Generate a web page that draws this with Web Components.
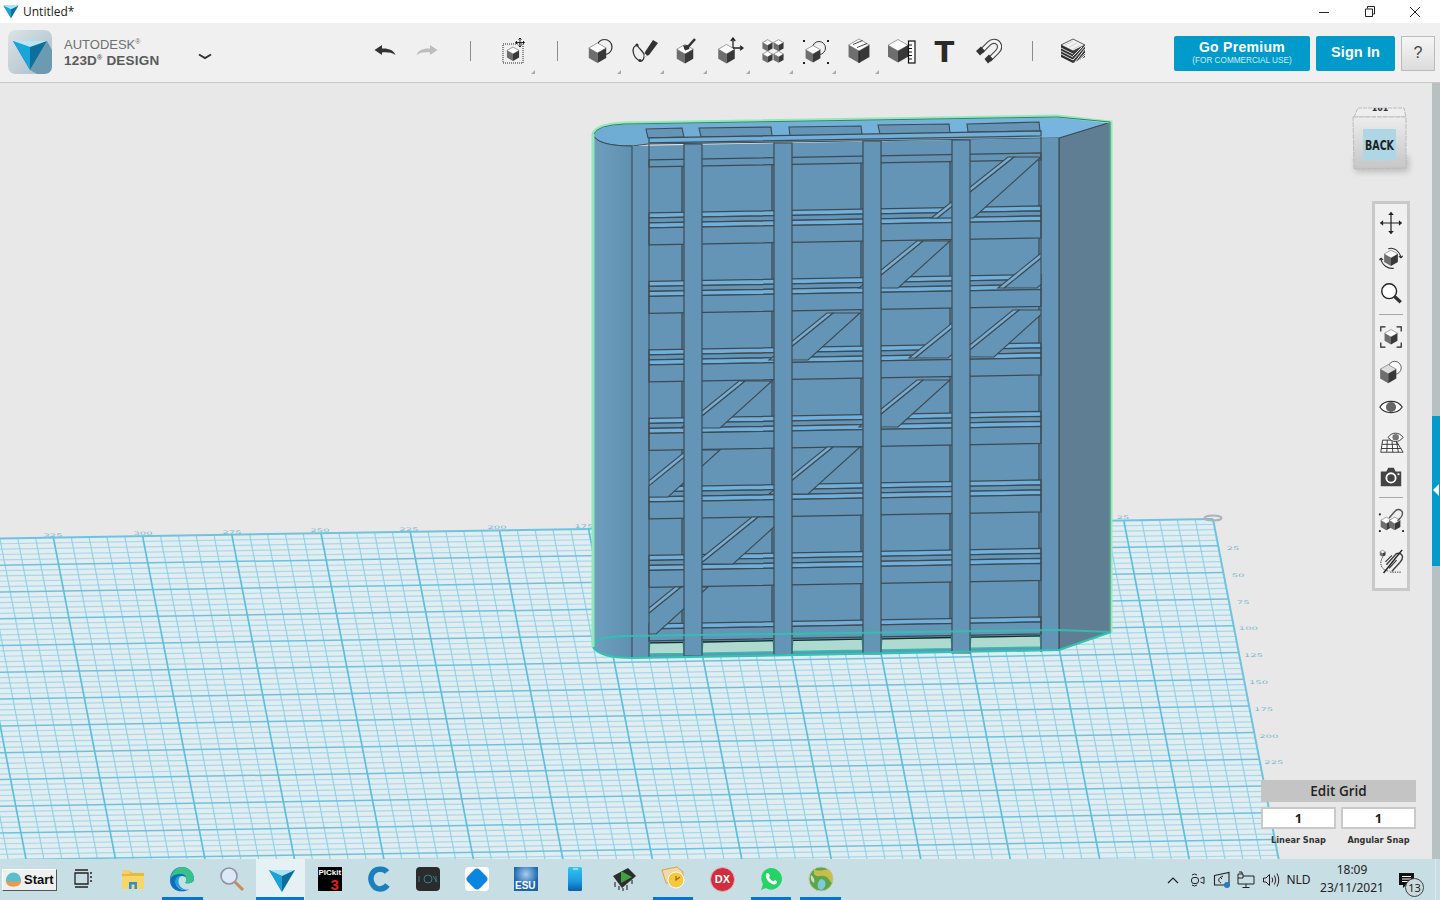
<!DOCTYPE html>
<html>
<head>
<meta charset="utf-8">
<title>123D Design</title>
<style>
html,body{margin:0;padding:0;height:100%;overflow:hidden;}
body{display:flex;flex-direction:column;height:900px;font-family:"Open Sans","Liberation Sans",sans-serif;background:#e8e8e8;}
</style>
</head>
<body>
<title-bar></title-bar>
<app-toolbar></app-toolbar>
<work-view></work-view>
<task-bar></task-bar>
<script>
// small icon helpers, all on a 28 box
const cube = (x,y,r,top="#fff") => {
    const w = r*.87, h = r*.5;
    return `<polygon points="${x},${y-r} ${x+w},${y-h} ${x},${y} ${x-w},${y-h}" fill="${top}" stroke="#444" stroke-width=".5"/>
    <polygon points="${x-w},${y-h} ${x},${y} ${x},${y+r} ${x-w},${y+h}" fill="#6e6e6e"/>
    <polygon points="${x+w},${y-h} ${x},${y} ${x},${y+r} ${x+w},${y+h}" fill="#383838"/>`;
};
const svg = (inner,size=28) => `<svg slot="icon" width="${size}" height="${size}" viewBox="0 0 28 28">${inner}</svg>`;
const dots = (x,y,w,h) => `<rect x="${x}" y="${y}" width="${w}" height="${h}" fill="none" stroke="#222" stroke-width="1" stroke-dasharray="1 1"/>`;
const handles = pts => pts.map(p=>`<rect x="${p[0]}" y="${p[1]}" width="2" height="2" fill="#222"/>`).join("");

const icons = {
    undo: `<path d="M3.500 13 L11 8 L11 11.500 C17 11 23 13 24.500 18 C21 15.500 16 15 11 15.500 L11 18Z" fill="#333"/>`,
    redo: `<path d="M24.500 13 L17 8 L17 11.500 C11 11 5 13 3.500 18 C7 15.500 12 15 17 15.500 L17 18Z" fill="#bdbdbd"/>`,
    transform: dots(3,7,20,19)+cube(13,17,7)+`<path d="M20 1V10M15.500 5.500H24.500M20 1l-1.500 1.500M20 1l1.500 1.500M20 10l-1.500-1.500M20 10l1.500-1.500M15.500 5.500l1.500-1.500M15.500 5.500l1.500 1.500M24.500 5.500l-1.500-1.500M24.500 5.500l-1.500 1.500" stroke="#222" stroke-width="1" fill="none"/>`,
    prim: `<circle cx="17.500" cy="10" r="7.500" fill="none" stroke="#333" stroke-width="1.200"/>`+cube(10.500,16,10),
    sketch: `<path d="M7 8C1 10 2 20 10 24C13 25 15 20 14 17C12 13 9 12 7 8Z" fill="none" stroke="#333" stroke-width="1.300"/><circle cx="7" cy="8" r="1.600" fill="#333"/><circle cx="10" cy="23.500" r="1.600" fill="#333"/><polygon points="15,15 23,3 28,6 19,18 14,20" fill="#333"/><polygon points="15,16.500 14,20 17,18.500" fill="#fff"/>`,
    construct: cube(12,17,9.500)+`<path d="M14 11L22 2" stroke="#333" stroke-width="2.600"/><polygon points="10,8.500 15,8 16.500,12 12,13.500" fill="#333"/>`,
    modify: cube(10.500,17,9.500)+`<path d="M17 11V1M14.800 4L17 1L19.200 4M17 11H27M24 8.800L27 11L24 13.200" stroke="#222" stroke-width="1.300" fill="none"/>`,
    pattern: cube(8.500,8.500,5.800)+cube(19.500,8.500,5.800)+cube(8.500,20,5.800)+cube(19.500,20,5.800),
    group: handles([[1,3],[25,3],[1,25],[25,25]])+`<circle cx="17" cy="11" r="6.500" fill="none" stroke="#333" stroke-width="1"/>`+cube(11,17,8.500),
    combine: cube(14,14,12)+`<path d="M8 7.500L17.500 3.500M12 10.500L22 6.500" stroke="#444" stroke-width="1"/><path d="M14 14V26" stroke="#1a1a1a" stroke-width="1"/>`,
    measure: cube(10,14,11.500)+`<rect x="20.500" y="4" width="6.500" height="22" fill="#fff" stroke="#111" stroke-width="1.200"/><path d="M21 8h3M21 11.500h3M21 15h3M21 18.500h3M21 22h3" stroke="#111" stroke-width="1"/>`,
    // magnet: hollow horseshoe with dark tips, open to the lower left
    snap: `<path d="M7 14.500L15 6.500C18 3.500 22.500 3.800 24.500 6.500C26.500 9.500 25.500 12.500 23 15L15 23" fill="none" stroke="#444" stroke-width="5.200"/><path d="M7 14.500L15 6.500C18 3.500 22.500 3.800 24.500 6.500C26.500 9.500 25.500 12.500 23 15L15 23" fill="none" stroke="#f4f4f4" stroke-width="3"/><polygon points="2,14 7,9.500 11,14 6,18.500" fill="#333"/><polygon points="10.500,22 15,17.500 19,22 14,26.500" fill="#333"/>`,
    // stack of sheets, top sheet pale, sides black with white hatching
    layers: `<polygon points="14,2 26,8 14,14 2,8" fill="#f2f2f2" stroke="#333" stroke-width=".8"/><path d="M6 8L14 4M10 10L18 6M14 12L22 8" stroke="#bbb" stroke-width=".6"/>
    <polygon points="2,8 14,14 14,26 2,20" fill="#2e2e2e"/><polygon points="26,8 14,14 14,26 26,20" fill="#3a3a3a"/>
    <path d="M2 11L14 17M2 14L14 20M2 17L14 23" stroke="#ddd" stroke-width="1" fill="none"/><path d="M16 25L26 12M14 23L26 9M14 19L23 10M19 24L26 16M22 22L26 18" stroke="#eee" stroke-width="1"/>`,
    pan: `<path d="M14 3V25M3 14H25" stroke="#222" stroke-width="1.300"/><path d="M14 2l-3 3.500h6zM14 26l-3-3.500h6zM2 14l3.500-3h0v6zM26 14l-3.500-3v6z" fill="#222"/>`,
    orbit: cube(14,14,8.500)+`<path d="M11 4C17 2 23 6 25 14M25 14l-2.500-2M25 14l1.500-2.500M17 25C11 26 4 22 3 14M3 14l-1.500 2.500M3 14l2.500 2" fill="none" stroke="#333" stroke-width="1.200"/>`,
    zoom: `<circle cx="12" cy="12" r="8" fill="#fff" stroke="#222" stroke-width="1.500"/><path d="M17.500 17.500L24.500 24" stroke="#333" stroke-width="3.500"/>`,
    fit: `<path d="M3 8V3H8M20 3H25V8M3 20V25H8M20 25H25V20" fill="none" stroke="#222" stroke-width="1.300"/>`+cube(14,14,8),
    persp: `<circle cx="18" cy="9.500" r="7" fill="#fff" stroke="#555" stroke-width="1"/>`+cube(11,16,10,"#ddd"),
    eye: `<path d="M2 14C7 6 21 6 26 14C21 22 7 22 2 14Z" fill="#fff" stroke="#333" stroke-width="1.300"/><circle cx="14" cy="14" r="5.500" fill="#666"/>`,
    gridEye: `<polygon points="5,12 19,12 27,25 3,25" fill="#fff" stroke="#333" stroke-width="1"/><path d="M4.500 16.500H22M3.800 21H25M10 12L9.500 25M15 12L16 25M20 14L22 25" stroke="#333" stroke-width="1"/><path d="M11 9C14.500 3 23 3 27 9C23 15 14.500 15 11 9Z" fill="#fff" stroke="#333" stroke-width="1"/><circle cx="19" cy="8.800" r="3.500" fill="#777"/>`,
    camera: `<path d="M3 8H9L11 4H17L19 8H25V24H3Z" fill="#444"/><circle cx="14" cy="15" r="5" fill="#444" stroke="#fff" stroke-width="2"/><rect x="21" y="10" width="2" height="2" fill="#fff"/>`,
    snapCube: cube(9,19,7)+cube(18,19,7)+`<path d="M12 13L18 6C20 3 24 3 26 6C27 9 26 11 24 13L21 16" fill="none" stroke="#555" stroke-width="1.500"/>`+handles([[1,8],[1,26],[26,26]]),
    noSnap: cube(5,6,3.500)+`<path d="M5 10C1 16 3 24 12 25M13 26h12" fill="none" stroke="#333" stroke-width="1" stroke-dasharray="1.500 1"/><path d="M9 18L18 8C20 5 24 5 26 8C27 11 26 13 24 15L15 25" fill="none" stroke="#444" stroke-width="1.600"/><path d="M6 27L26 2" stroke="#222" stroke-width="1.600"/><path d="M8 15L15 8M12 22L20 13" stroke="#333" stroke-width="1.200"/>`,
};

const vLogo = `<polygon points="1,3 27,3 14,25" fill="#0a6f9c"/><polygon points="1,3 14,9 14,25" fill="#18a3d9"/><polygon points="1,3 27,3 14,9" fill="#a9e3f7"/>`;

class TitleBar extends HTMLElement{
    constructor(){
        super();
        const shadow = this.attachShadow({ mode: "open" });
        shadow.innerHTML = `
        <style>
        :host{display:flex;align-items:center;height:23px;background:#fff;flex:none;color:#222;font:12px "Open Sans",sans-serif;}
        svg.logo{margin:0 2px 0 2px;flex:none;}
        span{margin-left:1px;}
        .win{margin-left:auto;display:flex;padding-right:2px;}
        .win div{width:45.500px;height:23px;display:flex;align-items:center;justify-content:center;}
        </style>
        <svg class="logo" width="18" height="16" viewBox="0 0 28 28">${vLogo}</svg>
        <span>Untitled*</span>
        <div class="win">
            <div><svg width="12" height="12"><path d="M1 6.500H11" stroke="#222" stroke-width="1"/></svg></div>
            <div><svg width="12" height="12"><path d="M3.500 2.500V.5H10.500V8H8.500M1.500 3H8.500V10.500H1.500Z" fill="none" stroke="#222" stroke-width="1"/></svg></div>
            <div><svg width="12" height="12"><path d="M1 1L11 11M11 1L1 11" stroke="#222" stroke-width="1"/></svg></div>
        </div>`;
    }
}
customElements.define("title-bar", TitleBar);

class ToolButton extends HTMLElement{
    constructor(){
        super();
        const shadow = this.attachShadow({ mode: "open" });
        shadow.innerHTML = `
        <style>
        :host{display:flex;align-items:center;justify-content:center;position:relative;height:100%;flex:none;width:var(--w,43px);}
        .more{position:absolute;right:1px;top:47px;width:0;height:0;border-left:4px solid transparent;border-bottom:4px solid #aaa;display:none;}
        :host([more]) .more{display:block;}
        ::slotted(svg){margin-top:-3px;}
        </style>
        <slot name="icon"></slot><slot></slot><div class="more"></div>`;
    }
}
customElements.define("tool-button", ToolButton);

class AppToolbar extends HTMLElement{
    constructor(){
        super();
        const shadow = this.attachShadow({ mode: "open" });
        const tool = (n,more=true,w=43) => `<tool-button ${more?"more":""} style="--w:${w}px">${svg(icons[n])}</tool-button>`;
        shadow.innerHTML = `
        <style>
        :host{display:flex;align-items:stretch;flex:none;height:59px;background:#f0f0f0;border-bottom:1px solid #c8c8c8;padding-left:8px;box-sizing:content-box;font-family:"Liberation Sans",sans-serif;}
        .logo{width:44px;height:44px;align-self:center;margin-top:-1px;border-radius:7px;flex:none;}
        .brand{width:129px;margin-left:12px;align-self:center;color:#707070;font-size:13px;line-height:16px;margin-top:0;flex:none;}
        .brand b{display:block;font-weight:bold;color:#5a5a5a;font-size:13.500px;letter-spacing:.2px;}
        .brand sup{font-size:7px;line-height:0;vertical-align:5px;}
        .chev{width:24px;flex:none;display:flex;align-items:center;justify-content:center;margin-top:9px;}
        .sep{width:1px;height:20px;background:#8c8c8c;align-self:center;flex:none;margin-top:-3px;}
        .t{font:bold 29px "DejaVu Sans",sans-serif;color:#2a2a2a;margin-top:-1px;}
        .right{margin-left:auto;display:flex;gap:6px;padding:13px 5px 0 0;align-items:flex-start;}
        .btn{background:#009bcb;color:#fff;border-radius:2px;font:bold 14px "Liberation Sans",sans-serif;display:flex;flex-direction:column;align-items:center;justify-content:center;height:35px;letter-spacing:.3px;box-sizing:border-box;}
        .prem{width:136px;line-height:14px;padding-bottom:1px;}
        .prem small{font-weight:normal;font-size:8.200px;color:#cdeaf4;letter-spacing:0;line-height:10px;margin-top:2px;}
        .sign{width:79px;font-size:14.500px;letter-spacing:.1px;padding-bottom:3px;}
        .help{width:32px;border:1px solid #bbb;background:linear-gradient(#f6f6f6,#dcdcdc);color:#444;font:16px "Liberation Sans",sans-serif;display:flex;align-items:center;justify-content:center;padding-bottom:2px;box-sizing:content-box;height:31px;}
        </style>
        <svg class="logo" viewBox="0 0 44 44">
            <defs><linearGradient id="lg" x1="0" y1="0" x2="1" y2="1"><stop offset="0" stop-color="#dbe3e7"/><stop offset="1" stop-color="#a9bdc8"/></linearGradient></defs>
            <rect width="44" height="44" rx="7" fill="url(#lg)"/>
            <path d="M39 11L22 40L29 44H37Q44 44 44 37V20Z" fill="#6c9ab0"/>
            <polygon points="5,11 39,11 22,40" fill="#0d6f9a"/><polygon points="5,11 22,17 22,40" fill="#1aa5da"/><polygon points="5,11 39,11 22,17" fill="#b4e6f8"/>
        </svg>
        <div class="brand">AUTODESK<sup>®</sup><b>123D<sup>®</sup> DESIGN</b></div>
        <div class="chev"><svg width="16" height="8"><path d="M2 1.500L8 5L14 1.500" fill="none" stroke="#333" stroke-width="2"/></svg></div>
        <div style="width:147px;flex:none"></div>
        ${tool("undo",false,42)}${tool("redo",false,42)}
        <div class="sep" style="margin-left:22px"></div>
        <div style="margin-left:21px;display:flex">${tool("transform",true,44)}</div>
        <div class="sep" style="margin-left:21px"></div>
        <div style="margin-left:21px;display:flex">
            ${tool("prim")}${tool("sketch")}${tool("construct")}${tool("modify")}${tool("pattern")}${tool("group")}${tool("combine")}${tool("measure",false)}
            <tool-button><span class="t">T</span></tool-button>${tool("snap",false)}
        </div>
        <div class="sep" style="margin-left:23px"></div>
        <div style="margin-left:18px;display:flex">${tool("layers",false,44)}</div>
        <div class="right">
            <div class="btn prem">Go Premium<small>(FOR COMMERCIAL USE)</small></div>
            <div class="btn sign">Sign In</div>
            <div class="help">?</div>
        </div>`;
    }
}
customElements.define("app-toolbar", AppToolbar);

class ViewCube extends HTMLElement{
    constructor(){
        super();
        const shadow = this.attachShadow({ mode: "open" });
        shadow.innerHTML = `
        <style>:host{position:absolute;left:1346px;top:21px;width:70px;height:76px;display:block;}</style>
        <svg width="70" height="76" viewBox="0 0 70 76">
            <defs>
                <linearGradient id="f" x1="0" y1="0" x2="0" y2="1"><stop offset="0" stop-color="#ececec"/><stop offset="1" stop-color="#c6c6c6"/></linearGradient>
                <filter id="b" x="-30%" y="-30%" width="160%" height="160%"><feGaussianBlur stdDeviation="3"/></filter>
            </defs>
            <rect x="9" y="52" width="54" height="16" fill="#000" opacity=".18" filter="url(#b)"/>
            <polygon points="8,13 12,4 58,4 60,13" fill="#eee" stroke="#bbb" stroke-dasharray="4 1"/>
            <clipPath id="tc"><rect x="10" y="4" width="50" height="8"/></clipPath>
            <g clip-path="url(#tc)"><text x="34" y="7" text-anchor="middle" style="font:bold 8px 'DejaVu Sans',sans-serif" fill="#333">101</text></g>
            <polygon points="7,13 60,13 60,64 8,65" fill="url(#f)" stroke="#bbb" stroke-dasharray="5 1"/>
            <rect x="17" y="25" width="33" height="31" fill="#aed6e5"/>
            <text x="33.500" y="46" text-anchor="middle" style="font:bold 14px 'DejaVu Sans',sans-serif;font-stretch:condensed" textLength="29" lengthAdjust="spacingAndGlyphs" fill="#222">BACK</text>
        </svg>`;
    }
}
customElements.define("view-cube", ViewCube);

class NavBar extends HTMLElement{
    constructor(){
        super();
        const shadow = this.attachShadow({ mode: "open" });
        const tip = n => `<div class="i">${svg(icons[n],26).replace('slot="icon"','')}</div>`;
        shadow.innerHTML = `
        <style>
        :host{position:absolute;left:1372px;top:118px;width:38px;height:390px;box-sizing:border-box;background:#f0f0f0;border:3px solid #c9c9c9;display:flex;flex-direction:column;align-items:center;padding-top:1px;}
        .i{height:35px;display:flex;align-items:center;justify-content:center;flex:none;}
        .s{width:24px;height:1px;background:#a8a8a8;flex:none;}
        </style>
        ${tip("pan")}${tip("orbit")}${tip("zoom")}<div class="s" style="margin:4px 0 4px"></div>
        ${tip("fit")}${tip("persp")}${tip("eye")}${tip("gridEye")}${tip("camera")}<div class="s" style="margin:3px 0 3px"></div>
        ${tip("snapCube")}<div style="height:7px;flex:none"></div>${tip("noSnap")}`;
    }
}
customElements.define("nav-bar", NavBar);

class SideTab extends HTMLElement{
    constructor(){
        super();
        const shadow = this.attachShadow({ mode: "open" });
        shadow.innerHTML = `
        <style>
        :host{position:absolute;right:0;top:0;bottom:0;width:8px;background:#b7c1c1;display:block;}
        div{position:absolute;left:0;right:0;top:333px;height:150px;background:#009bcb;}
        i{position:absolute;left:1px;top:68px;border-right:6px solid #fff;border-top:6px solid transparent;border-bottom:6px solid transparent;}
        </style>
        <div><i></i></div>`;
    }
}
customElements.define("side-tab", SideTab);

class GridPanel extends HTMLElement{
    constructor(){
        super();
        const shadow = this.attachShadow({ mode: "open" });
        shadow.innerHTML = `
        <style>
        :host{position:absolute;left:1261px;top:697px;width:155px;display:block;font-family:"Liberation Sans",sans-serif;color:#222;}
        .h{height:22px;background:#c4c4c4;font:600 13.500px/22px "Open Sans",sans-serif;text-align:center;}
        .r{display:grid;grid-template-columns:75px 75px;gap:0 5px;margin-top:5px;}
        .v{height:22px;box-sizing:border-box;border:2px solid #c9c9c9;background:#fff;font:bold 13px/18px "Open Sans",sans-serif;text-align:center;}
        .l{font:bold 8.200px/12px "DejaVu Sans",sans-serif;text-align:center;margin-top:5px;color:#333;}
        </style>
        <div class="h">Edit Grid</div>
        <div class="r"><div class="v">1</div><div class="v">1</div><div class="l">Linear Snap</div><div class="l">Angular Snap</div></div>`;
    }
}
customElements.define("grid-panel", GridPanel);

class GridCanvas extends HTMLElement{
    constructor(){
        super();
        const shadow = this.attachShadow({ mode: "open" });
        shadow.innerHTML = `
        <style>
        :host{position:absolute;inset:0;display:block;}
        svg{display:block;}
        text{font:8px "DejaVu Sans",sans-serif;fill:#7db9cc;}
        </style>
        <svg width="1440" height="777" viewBox="0 83 1440 777">${this.grid()}${this.model()}</svg>`;
    }
    grid(){
        const X0 = 1213, Y0 = 519, dv = .193, dh = .016, BOT = 862;
        const topY = x => Y0 + (X0-x)*dh;
        let out = `<polygon points="${X0},${Y0} ${X0+dv*(BOT-Y0)},${BOT} -5,${BOT} -5,${topY(-5)}" fill="#e2edf1"/>`;
        // horizontal lines, minor first
        const hs = [], vs = [];
        for(let j=1;j<=70;j++){
            const y = Y0 + j*26.7/5, x = X0 + dv*(y-Y0);
            if(y-40>BOT) break;
            const major = j%5===0;
            const yLeft = y + (x+5)*dh;
            hs.push([major,`<line x1="${x}" y1="${y}" x2="-5" y2="${yLeft}" stroke="${major?"#6cc2de":"#a6d8e8"}" stroke-width="${major?1.500:1.200}"/>`]);
        }
        for(let i=1;i<=75;i++){
            const x = X0 - i*89.2/5, y = topY(x);
            const major = i%5===0;
            vs.push([major,`<line x1="${x}" y1="${y}" x2="${x+dv*(BOT-y)}" y2="${BOT}" stroke="${major?"#5fbedd":"#93d2e6"}" stroke-width="${major?1.700:1.200}"/>`]);
        }
        out += hs.filter(l=>!l[0]).map(l=>l[1]).join("") + vs.filter(l=>!l[0]).map(l=>l[1]).join("");
        out += hs.filter(l=>l[0]).map(l=>l[1]).join("") + vs.filter(l=>l[0]).map(l=>l[1]).join("");
        out += `<line x1="${X0}" y1="${Y0}" x2="${X0+dv*(BOT-Y0)}" y2="${BOT}" stroke="#6fc3df" stroke-width="2"/>`;
        out += `<line x1="${X0}" y1="${Y0}" x2="-5" y2="${topY(-5)}" stroke="#6fc3df" stroke-width="2"/>`;
        out += `<ellipse cx="${X0}" cy="${Y0-1}" rx="8.500" ry="2.500" fill="none" stroke="#aab3b8" stroke-width="2"/>`;
        const squash = (x,y,t) => `<text transform="translate(${x},${y}) scale(1.250,.6)" text-anchor="middle">${t}</text>`;
        [[53,325],[143,300],[232,275],[320,250],[409,225],[497,200],[584,175],[1123,25]].forEach(p=>{
            out += squash(p[0],topY(p[0])-1,p[1]);
        });
        [25,50,75,100,125,150,175,200,225].forEach((t,k)=>{
            const y = 550 + k*26.8;
            out += squash(1233+k*5.100,y,t);
        });
        return out;
    }
    model(){
        const LIGHT = "#70afd9", FRONT = "#6495b6", EDGE = "#3d4a53";
        const sy = (x,y) => y - .018*(x-702);
        const band = (x1,x2,a,b,fill,extra="") => `<polygon points="${x1},${sy(x1,a)} ${x2},${sy(x2,a)} ${x2},${sy(x2,b)} ${x1},${sy(x1,b)}" fill="${fill}" stroke="${EDGE}" stroke-width="1.200" ${extra}/>`;
        const cols = [[649,684],[702,774],[792,863],[881,952],[970,1041]];
        const strips = [212,280.5,349,417.5,486,554.5,623];
        let o = `<defs>
            <linearGradient id="cyl" x1="0" x2="1" y1="0" y2="0"><stop offset="0" stop-color="#6e9fbf"/><stop offset="1" stop-color="#6090b0"/></linearGradient>
            <linearGradient id="cap" x1="0" x2="1" y1="0" y2="0"><stop offset="0" stop-color="#6facd4"/><stop offset="1" stop-color="#78b6e0"/></linearGradient>
        </defs>`;
        // side face and top face
        o += `<polygon points="1059,138 1111,122 1111,632 1059,650" fill="#5f7e94" stroke="${EDGE}" stroke-width="1"/>`;
        o += `<path d="M593,134 Q596,124 625,123 L1057,116 L1111,122 L1059,138 L648,144 L632,146 Q596,146 593,134Z" fill="url(#cap)" stroke="${EDGE}" stroke-width="1"/>`;
        [[646,129,682,128,684,137,648,138],[699,128,771,127,772,136,701,137],[789,127,861,126,862,135,790,136],[878,125,949,124,950,133,880,134],[967,124,1039,122,1040,131,968,132]].forEach(t=>{
            o += `<polygon points="${t.join(" ")}" fill="${FRONT}" stroke="${EDGE}" stroke-width="1.100"/>`;
        });
        // round end and the front plate
        o += `<path d="M593,134 Q596,146 632,146 L632,658 Q600,658 593,647Z" fill="url(#cyl)"/>`;
        o += `<path d="M593,134 Q596,146 632,146" fill="none" stroke="${EDGE}" stroke-width="1"/>`;
        o += `<polygon points="632,146 1059,138 1059,650 632,658" fill="${FRONT}"/>`;
        // horizontal rails and panels
        o += band(649,1041,137,142,LIGHT);
        o += band(649,1041,159,166,FRONT);
        strips.forEach((s,r)=>{
            const last = r===strips.length-1;
            o += band(649,1041,s,s+5,LIGHT);
            if(!last){
                o += band(649,1041,s+5,s+10,FRONT);
                o += band(649,1041,s+10,s+15,LIGHT);
                o += band(649,1041,s+15,s+32,FRONT);
            }else{
                o += band(649,1041,s+5,s+17,FRONT);
            }
        });
        // recess shadow on the right wall of every panel
        const tops = [166,...strips.slice(0,-1).map(s=>s+32)];
        cols.forEach(c=>{
            tops.forEach((t,r)=>{
                const x = c[1]-2;
                o += `<line x1="${x}" y1="${sy(x,t)}" x2="${x}" y2="${sy(x,strips[r])}" stroke="${EDGE}" stroke-width="1.300"/>`;
            });
        });
        // diagonals: x,y of the upper right corner, length down, optional clip
        const diag = (x,y,d=47,maxX=1041) => {
            const low = 52*(d===47?1:1.300);
            const upL = 85*(d===47?1:1.220);
            const pts1 = `${x-33},${y} ${x-27},${y} ${x-upL},${y+d} ${x-upL-6},${y+d}`;
            const pts2 = `${x-27},${y} ${x},${y} ${x-low},${y+d} ${x-upL},${y+d}`;
            return `<clipPath id="d${x}${y}"><rect x="649" y="100" width="${maxX-649}" height="600"/></clipPath>
            <g clip-path="url(#d${x}${y})"><polygon points="${pts2}" fill="${FRONT}" stroke="${EDGE}" stroke-width="1.100"/><polygon points="${pts1}" fill="#79aed2" stroke="${EDGE}" stroke-width="1.100"/></g>`;
        };
        [[1041,157,61],[950,241],[1089,241],[860,313],[1046,310],[1000,311,47,952],[772,381],[950,380],[720,450],[860,447],[785,517],[708,587]].forEach(p=>{
            o += diag(p[0],p[1],p[2]||47,p[3]||1041);
        });
        // openings at the bottom
        cols.forEach(c=>{
            o += `<polygon points="${c[0]+1},${sy(c[0],642)} ${c[1]-1},${sy(c[1],642)} ${c[1]},${sy(c[1],653)} ${c[0]},${sy(c[0],653)}" fill="#b0dad0" stroke="#27c2ae" stroke-width="1.200"/>`;
            o += `<line x1="${c[0]+1}" y1="${sy(c[0],642)}" x2="${c[1]-1}" y2="${sy(c[1],642)}" stroke="#1b2a2a" stroke-width="1.300"/>`;
        });
        // uprights
        [[684,702,144,656],[774,792,143,655],[863,881,141,654],[952,970,140,653]].forEach(p=>{
            o += `<polygon points="${p[0]},${p[2]} ${p[1]},${p[2]} ${p[1]},${p[3]} ${p[0]},${p[3]}" fill="${FRONT}" stroke="${EDGE}" stroke-width="1.200"/>`;
        });
        o += `<path d="M632,146V658M649,144V657M1041,137V652M1059,138V650" fill="none" stroke="${EDGE}" stroke-width="1.100"/>`;
        // selection outline
        o += `<path d="M593,647 Q594,636 628,636 L1059,630 L1111,632" fill="none" stroke="#2cc6b2" stroke-width="2" opacity=".85"/>`;
        o += `<path d="M593,647 Q600,658 632,658 L1059,650 L1111,632" fill="none" stroke="#2cc6b2" stroke-width="2.200"/>`;
        o += `<path d="M593,647 V134 Q596,124 625,123 L1057,116 L1111,122 V632" fill="none" stroke="#93e8bd" stroke-width="3"/>`;
        o += `<path d="M594,134 Q597,125 625,124 L1057,117 L1110,122 V632" fill="none" stroke="#1c6a52" stroke-width=".8"/>`;
        return o;
    }
}
customElements.define("grid-canvas", GridCanvas);

class WorkView extends HTMLElement{
    constructor(){
        super();
        const shadow = this.attachShadow({ mode: "open" });
        shadow.innerHTML = `
        <style>:host{display:block;position:relative;flex:1;background:#e8e8e8;overflow:hidden;min-height:0;}</style>
        <grid-canvas></grid-canvas><view-cube></view-cube><nav-bar></nav-bar><side-tab></side-tab><grid-panel></grid-panel>`;
    }
}
customElements.define("work-view", WorkView);

class TaskItem extends HTMLElement{
    constructor(){
        super();
        const shadow = this.attachShadow({ mode: "open" });
        shadow.innerHTML = `
        <style>
        :host{width:49.080px;height:41px;display:flex;align-items:center;justify-content:center;position:relative;flex:none;box-sizing:border-box;padding-bottom:1px;}
        :host([open])::after{content:"";position:absolute;left:4.500px;right:4.500px;bottom:0;height:3px;background:#0078d7;}
        :host([active]){background:#e6f1f5;}
        :host([active])::after{content:"";position:absolute;left:0;right:1px;bottom:0;height:3px;background:#0078d7;}
        </style><slot></slot>`;
    }
}
customElements.define("task-item", TaskItem);

class TaskBar extends HTMLElement{
    constructor(){
        super();
        const shadow = this.attachShadow({ mode: "open" });
        const ic = (inner,attr="") => `<task-item ${attr}><svg width="28" height="28" viewBox="0 0 28 28">${inner}</svg></task-item>`;
        shadow.innerHTML = `
        <style>
        :host{display:flex;align-items:center;height:41px;flex:none;background:#c8dee5;font:12px "Noto Sans","Open Sans",sans-serif;color:#222;position:relative;z-index:1;}
        .start{margin-left:2px;width:55px;height:22px;box-sizing:border-box;display:flex;align-items:center;gap:1px;padding-left:1px;background:#eef1f2;border:1px solid;border-color:#fff #555 #555 #fff;font:bold 13px "Liberation Sans",sans-serif;color:#111;flex:none;margin-right:2.800px;}
        .tray{margin-left:auto;margin-right:4px;display:flex;align-items:center;height:100%;border-right:1px solid #dfe9ec;padding-right:7px;}
        .tray svg{display:block;}
        .t{width:24.500px;display:flex;justify-content:center;flex:none;}
        .lang{width:31px;text-align:center;font-size:12px;padding-bottom:1px;}
        .clock{width:72px;margin-left:2px;text-align:center;line-height:18px;font-size:12px;padding-bottom:1px;}
        .note{width:30px;margin-left:10px;position:relative;height:24px;}
        .note b{position:absolute;left:7px;top:10px;width:17px;height:17px;border-radius:50%;background:#cdd9dc;border:1px solid #444;font:normal 11px/17px "Noto Sans",sans-serif;text-align:center;}
        </style>
        <div class="start"><svg width="19" height="18" viewBox="0 0 20 18"><path d="M2 10C2 4 6 1 10 1C14 1 18 4 18 10C18 12 16 13 14 14H6C4 13 2 12 2 10Z" fill="#59bfcb"/><path d="M2 10C6 11 14 11 18 10C18 14 14 16 10 16C6 16 2 14 2 10Z" fill="#ee9a4a"/></svg>Start</div>
        ${ic(`<path d="M5 8H18V19H5ZM5 5H18M5 22H18M20 8H22M20 12H22M20 16H22" fill="none" stroke="#222" stroke-width="1.300"/>`)}
        ${ic(`<path d="M3 6H11L13 8H25V13H3Z" fill="#e8b93c"/><path d="M3 5H11V9H3Z" fill="#f0d070"/><path d="M3 11H25V24H3Z" fill="#f7d765"/><path d="M10 24V17H18V24H15.500V19.500H12.500V24Z" fill="#2f8fd0"/>`)}
        ${ic(`<path d="M2 15C2 6 8 2 14 2C21 2 26 8 26 14C26 18 21 19 17 18C20 16 19 11 14 11C8 11 6 17 9 21C11 25 17 26 21 24C17 28 2 28 2 15Z" fill="#0d6fb8"/><path d="M2 15C3 6 9 2 14 2C21 2 26 8 26 14C26 18 21 19 17 18C20 14 18 9 13 9C7 9 3 11 2 15Z" fill="#36c28c"/><path d="M9 21C5 16 8 11 13 11C9 14 10 20 14 23C17 25 19 25 21 24C17 26 12 25 9 21Z" fill="#1ba0e2"/>`,"open")}
        ${ic(`<circle cx="11" cy="11" r="8" fill="#dde8f6" stroke="#8a93a6" stroke-width="1.600"/><path d="M17 17L25 25" stroke="#c98a55" stroke-width="3"/>`)}
        ${ic(`<g transform="translate(1,2)">${vLogo}</g>`,"active")}
        <task-item><span style="width:24px;height:24px;background:#000;color:#fff;font:bold 8px/11px 'Liberation Sans',sans-serif;text-align:center;display:block">PICkit<br><span style="display:block;text-align:right;padding-right:3px;color:#e02020;font-size:15px;line-height:13px">3</span></span></task-item>
        ${ic(`<path d="M22 7C19 3 10 3 7 9C4 15 8 24 15 24C19 24 21 22 22.500 20" fill="none" stroke="#1a7fbb" stroke-width="5.500"/>`)}
        ${ic(`<rect x="2" y="2" width="24" height="24" rx="4" fill="#2b2b2d"/><circle cx="14" cy="14" r="4" fill="none" stroke="#2f7f86" stroke-width="1"/><path d="M5 11V17M22 11V17M19 11L23 17" stroke="#2f7f86" stroke-width="1"/>`)}
        ${ic(`<rect x="2" y="2" width="24" height="24" rx="4" fill="#fff"/><rect x="5.500" y="5.500" width="17" height="17" rx="4" transform="rotate(45 14 14)" fill="#0b86e0"/>`)}
        <task-item><span style="width:24px;height:24px;background:radial-gradient(circle at 50% 30%,#a9cdf0,#1a66ad 60%);color:#fff;font:bold 10px/10px 'Liberation Sans',sans-serif;display:flex;align-items:flex-end;padding-left:1px;box-sizing:border-box">ESU</span></task-item>
        ${ic(`<defs><linearGradient id="ph" x1="0" y1="0" x2="0" y2="1"><stop offset="0" stop-color="#35c3f2"/><stop offset=".6" stop-color="#1b9ae0"/><stop offset="1" stop-color="#0b5ea8"/></linearGradient></defs><rect x="7" y="2" width="14" height="24" rx="1.500" fill="url(#ph)"/><rect x="12" y="3.500" width="5" height="1" fill="#dff"/>`)}
        ${ic(`<path d="M3 11L18 3L26 11L12 23Z" fill="#2b2e2c"/><path d="M5 17V22M9 21V25M13 23V26M17 20V25M22 15V19" stroke="#555" stroke-width="1.500"/><polygon points="11,6 22,12 11,18" fill="#3fa33b"/>`)}
        ${ic(`<path d="M3 5L18 2L24 7V18H7Z" fill="#f2d9a0" stroke="#d9a24a" stroke-width="1"/><circle cx="17" cy="15" r="8" fill="#f6c83e" stroke="#fff" stroke-width="1"/><path d="M17 11V15L21 12" stroke="#a46b12" stroke-width="1.300" fill="none"/>`,"open")}
        <task-item><span style="width:23px;height:23px;border-radius:50%;background:#d12d3e;border:1px solid #d8b8bc;color:#fff;font:bold 11px/23px 'Liberation Sans',sans-serif;text-align:center;display:block">DX</span></task-item>
        ${ic(`<path d="M4 25L6 19C1 10 8 3 14 3C21 3 25 9 25 14C25 21 16 28 9 23Z" fill="#25d366"/><path d="M10 8C8 10 9 13 11 16C14 19 17 20 19 19C21 17 20 16 18 15L16.500 16.500C15 16 12.500 14 12 12L13 11C12.500 9 11.500 7.500 10 8Z" fill="#fff"/>`,"open")}
        ${ic(`<circle cx="14" cy="14" r="12" fill="#58a845" stroke="#c0c6a8" stroke-width="1"/><path d="M7 4C12 8 20 3 23 5C25 9 27 13 25 18C22 16 22 12 17 11C13 10 10 13 7 9Z" fill="#e6c14d" opacity=".8"/><path d="M14 14C20 14 20 23 14 25C9 24 10 16 14 14Z" fill="#7fc8df"/><path d="M4 10C7 12 8 15 7 18C5 17 3 14 4 10Z" fill="#d9d9c8"/>`,"open")}
        <div class="tray">
            <div class="t"><svg width="14" height="14"><path d="M2 10L7 5L12 10" fill="none" stroke="#222" stroke-width="1.200"/></svg></div>
            <div class="t"><svg width="16" height="16"><path d="M3 3Q5.500 1 8 3M3 13Q5.500 15 8 13" fill="none" stroke="#222"/><rect x="2.500" y="5.500" width="7" height="6" rx="2.500" fill="none" stroke="#222"/><path d="M11.500 6.500L15 5V11.500L11.500 10" fill="none" stroke="#222"/></svg></div>
            <div class="t"><svg width="18" height="18"><path d="M1.500 4.500L16 1.500V14H1.500Z" fill="none" stroke="#222" stroke-width="1.100"/><path d="M8 6C5 7 5 11 8 12M10 5L7.500 6.500L9 8" fill="none" stroke="#222"/><circle cx="14" cy="14" r="3" fill="#2d76c9"/></svg></div>
            <div class="t"><svg width="18" height="18"><path d="M1 3H6V7H1ZM5 3V1M2 1H5M6 5H17V13H1V7" fill="none" stroke="#222" stroke-width="1"/><path d="M9 13V16M5.500 16.500H12.500" stroke="#222"/></svg></div>
            <div class="t"><svg width="18" height="16"><path d="M1.500 6H4L7.500 2.500V13.500L4 10H1.500Z" fill="none" stroke="#222"/><path d="M10 5.500Q11.500 8 10 10.500M12.500 3.500Q15 8 12.500 12.500M15 1.500Q18.500 8 15 14.500" fill="none" stroke="#222"/></svg></div>
            <div class="lang">NLD</div>
            <div class="clock">18:09<br>23/11/2021</div>
            <div class="note"><svg width="20" height="20" style="margin-top:4px"><path d="M1 1H16V13H8L5 16V13H1Z" fill="#111"/><path d="M4 4.500H13M4 7H13M4 9.500H10" stroke="#fff"/></svg><b>13</b></div>
        </div>`;
    }
}
customElements.define("task-bar", TaskBar);
</script>
</body>
</html>
